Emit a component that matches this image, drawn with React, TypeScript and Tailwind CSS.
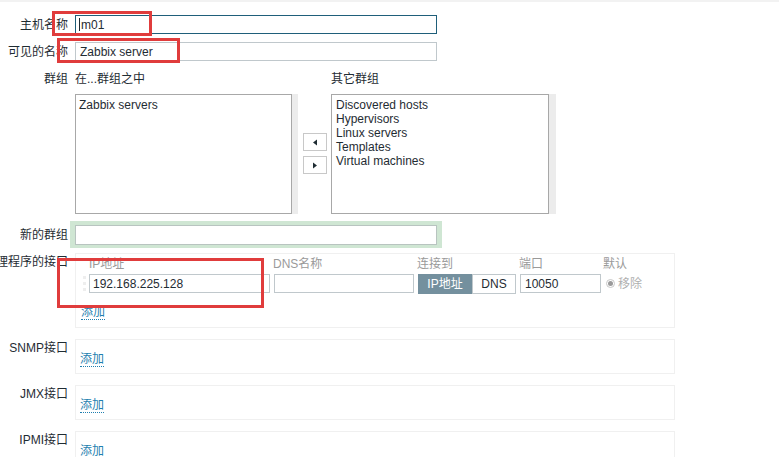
import React from "react";

const font = "[font-family:'Liberation_Sans','Noto_Sans_CJK_SC',sans-serif]";

function Label({ children, className = "" }: { children: React.ReactNode; className?: string }) {
  return (
    <div className={`w-[68px] shrink-0 flex justify-end whitespace-nowrap text-[12px] text-[#1f2c33] ${className}`}>
      {children}
    </div>
  );
}

function AddLink() {
  return (
    <span className="text-[12px] text-[#1f7fb0] border-b border-dotted border-[#1f7fb0] leading-[14px]">添加</span>
  );
}

function EmptyInterface({ label, top }: { label: string; top: string }) {
  return (
    <div className={`flex gap-[7px] ${top}`}>
      <Label>{label}</Label>
      <div className="w-[600px] h-[35px] border border-[#f0f0f0] pl-[4px] pt-[6px]">
        <AddLink />
      </div>
    </div>
  );
}

export default function App() {
  return (
    <div className={`relative w-[779px] h-[457px] overflow-hidden bg-white ${font} border-t-2 border-[#f2f2f2]`}>
      <div className="flex flex-col">
        {/* host name */}
        <div className="flex items-center gap-[7px] mt-[13px]">
          <Label>主机名称</Label>
          <div className="w-[362px] h-[19px] border border-[#1f5f7a] flex items-center pl-[3px] text-[12px] text-[#1f2c33]">
            <span className="w-px h-[13px] bg-[#1f2c33] mr-[1px]" />m01
          </div>
        </div>
        {/* visible name */}
        <div className="flex items-center gap-[7px] mt-[8px]">
          <Label>可见的名称</Label>
          <div className="w-[362px] h-[19px] border border-[#c0c8cc] flex items-center pl-[4px] text-[12px] text-[#1f2c33]">
            Zabbix server
          </div>
        </div>
        {/* groups */}
        <div className="flex gap-[7px] mt-[9px]">
          <Label>群组</Label>
          <div className="flex flex-col">
            <div className="flex text-[12px] text-[#1f2c33] h-[17px]">
              <span className="w-[256px]">在...群组之中</span>
              <span>其它群组</span>
            </div>
            <div className="flex mt-[7px]">
              <div className="flex">
                <div className="w-[217px] h-[120px] border border-[#a8a8a8] pl-[3px] pt-[3px] text-[12px] leading-[14px] text-[#1f2c33]">
                  Zabbix servers
                </div>
                <div className="w-[6px] h-[120px] bg-[#ececec]" />
              </div>
              <div className="flex flex-col gap-[5px] ml-[5px] mt-[39px]">
                <button className="w-[24px] h-[18px] border border-[#c8c8c8] bg-white flex items-center justify-center">
                  <svg width="6" height="7" viewBox="0 0 6 7"><path d="M5 0.5L1 3.5L5 6.5Z" fill="#1f2c33" /></svg>
                </button>
                <button className="w-[24px] h-[18px] border border-[#c8c8c8] bg-white flex items-center justify-center">
                  <svg width="6" height="7" viewBox="0 0 6 7"><path d="M1 0.5L5 3.5L1 6.5Z" fill="#1f2c33" /></svg>
                </button>
              </div>
              <div className="flex ml-[4px]">
                <div className="w-[218px] h-[120px] border border-[#a8a8a8] pl-[4px] pt-[3px] text-[12px] leading-[14px] text-[#1f2c33] flex flex-col">
                  <span>Discovered hosts</span>
                  <span>Hypervisors</span>
                  <span>Linux servers</span>
                  <span>Templates</span>
                  <span>Virtual machines</span>
                </div>
                <div className="w-[7px] h-[120px] bg-[#ececec]" />
              </div>
            </div>
          </div>
        </div>
        {/* new group */}
        <div className="flex items-center gap-[2px] mt-[7px]">
          <div className="w-[68px] shrink-0 flex justify-end text-[12px] text-[#1f2c33]">新的群组</div>
          <div className="w-[372px] h-[27px] bg-[#cfe6d3] flex items-center pl-[5px]">
            <div className="w-[362px] h-[20px] border border-[#b8c4c0] bg-white" />
          </div>
        </div>
        {/* agent interfaces */}
        <div className="flex gap-[7px] mt-[5px]">
          <Label>代理程序的接口</Label>
          <div className="w-[600px] h-[75px] border border-[#f0f0f0] pl-[4px] pt-[1px]">
            <div className="flex text-[12px] text-[#9a9a9a] h-[18px] items-end">
              <span className="w-[193px] pl-[9px]">IP地址</span>
              <span className="w-[144px]">DNS名称</span>
              <span className="w-[102px]">连接到</span>
              <span className="w-[84px]">端口</span>
              <span>默认</span>
            </div>
            <div className="flex items-center h-[21px]">
              <span className="w-[8px] h-[17px] flex flex-col justify-around items-center mr-[1px]">
                <span className="w-[3px] h-[3px] bg-[#eeeeee]" />
                <span className="w-[3px] h-[3px] bg-[#eeeeee]" />
                <span className="w-[3px] h-[3px] bg-[#eeeeee]" />
              </span>
              <div className="w-[181px] h-[19px] border border-[#c0c8cc] flex items-center pl-[3px] text-[12px] text-[#1f2c33]">
                192.168.225.128
              </div>
              <div className="w-[140px] h-[19px] border border-[#c0c8cc] ml-[4px]" />
              <div className="flex ml-[4px] h-[20px] text-[12px]">
                <span className="w-[54px] bg-[#74909e] text-white flex items-center justify-center">IP地址</span>
                <span className="w-[44px] border border-[#c0c8cc] text-[#1f2c33] flex items-center justify-center">DNS</span>
              </div>
              <div className="w-[81px] h-[19px] border border-[#c0c8cc] ml-[4px] flex items-center pl-[4px] text-[12px] text-[#1f2c33]">
                10050
              </div>
              <span className="ml-[5px] w-[9px] h-[9px] rounded-full border border-[#c8c8c8] flex items-center justify-center">
                <span className="w-[5px] h-[5px] rounded-full bg-[#9a9a9a]" />
              </span>
              <span className="ml-[3px] text-[12px] text-[#b0b0b0]">移除</span>
            </div>
            <div className="mt-[5px] pl-[1px]">
              <AddLink />
            </div>
          </div>
        </div>
        <EmptyInterface label="SNMP接口" top="mt-[11px]" />
        <EmptyInterface label="JMX接口" top="mt-[11px]" />
        <EmptyInterface label="IPMI接口" top="mt-[11px]" />
      </div>

      {/* red annotation boxes */}
      <div className="absolute left-[52px] top-[9px] w-[100px] h-[25px] border-[3px] border-[#e03c3c]" />
      <div className="absolute left-[57px] top-[36px] w-[123px] h-[25px] border-[3px] border-[#e03c3c]" />
      <div className="absolute left-[57px] top-[256px] w-[207px] h-[50px] border-[3px] border-[#e03c3c]" />
    </div>
  );
}
